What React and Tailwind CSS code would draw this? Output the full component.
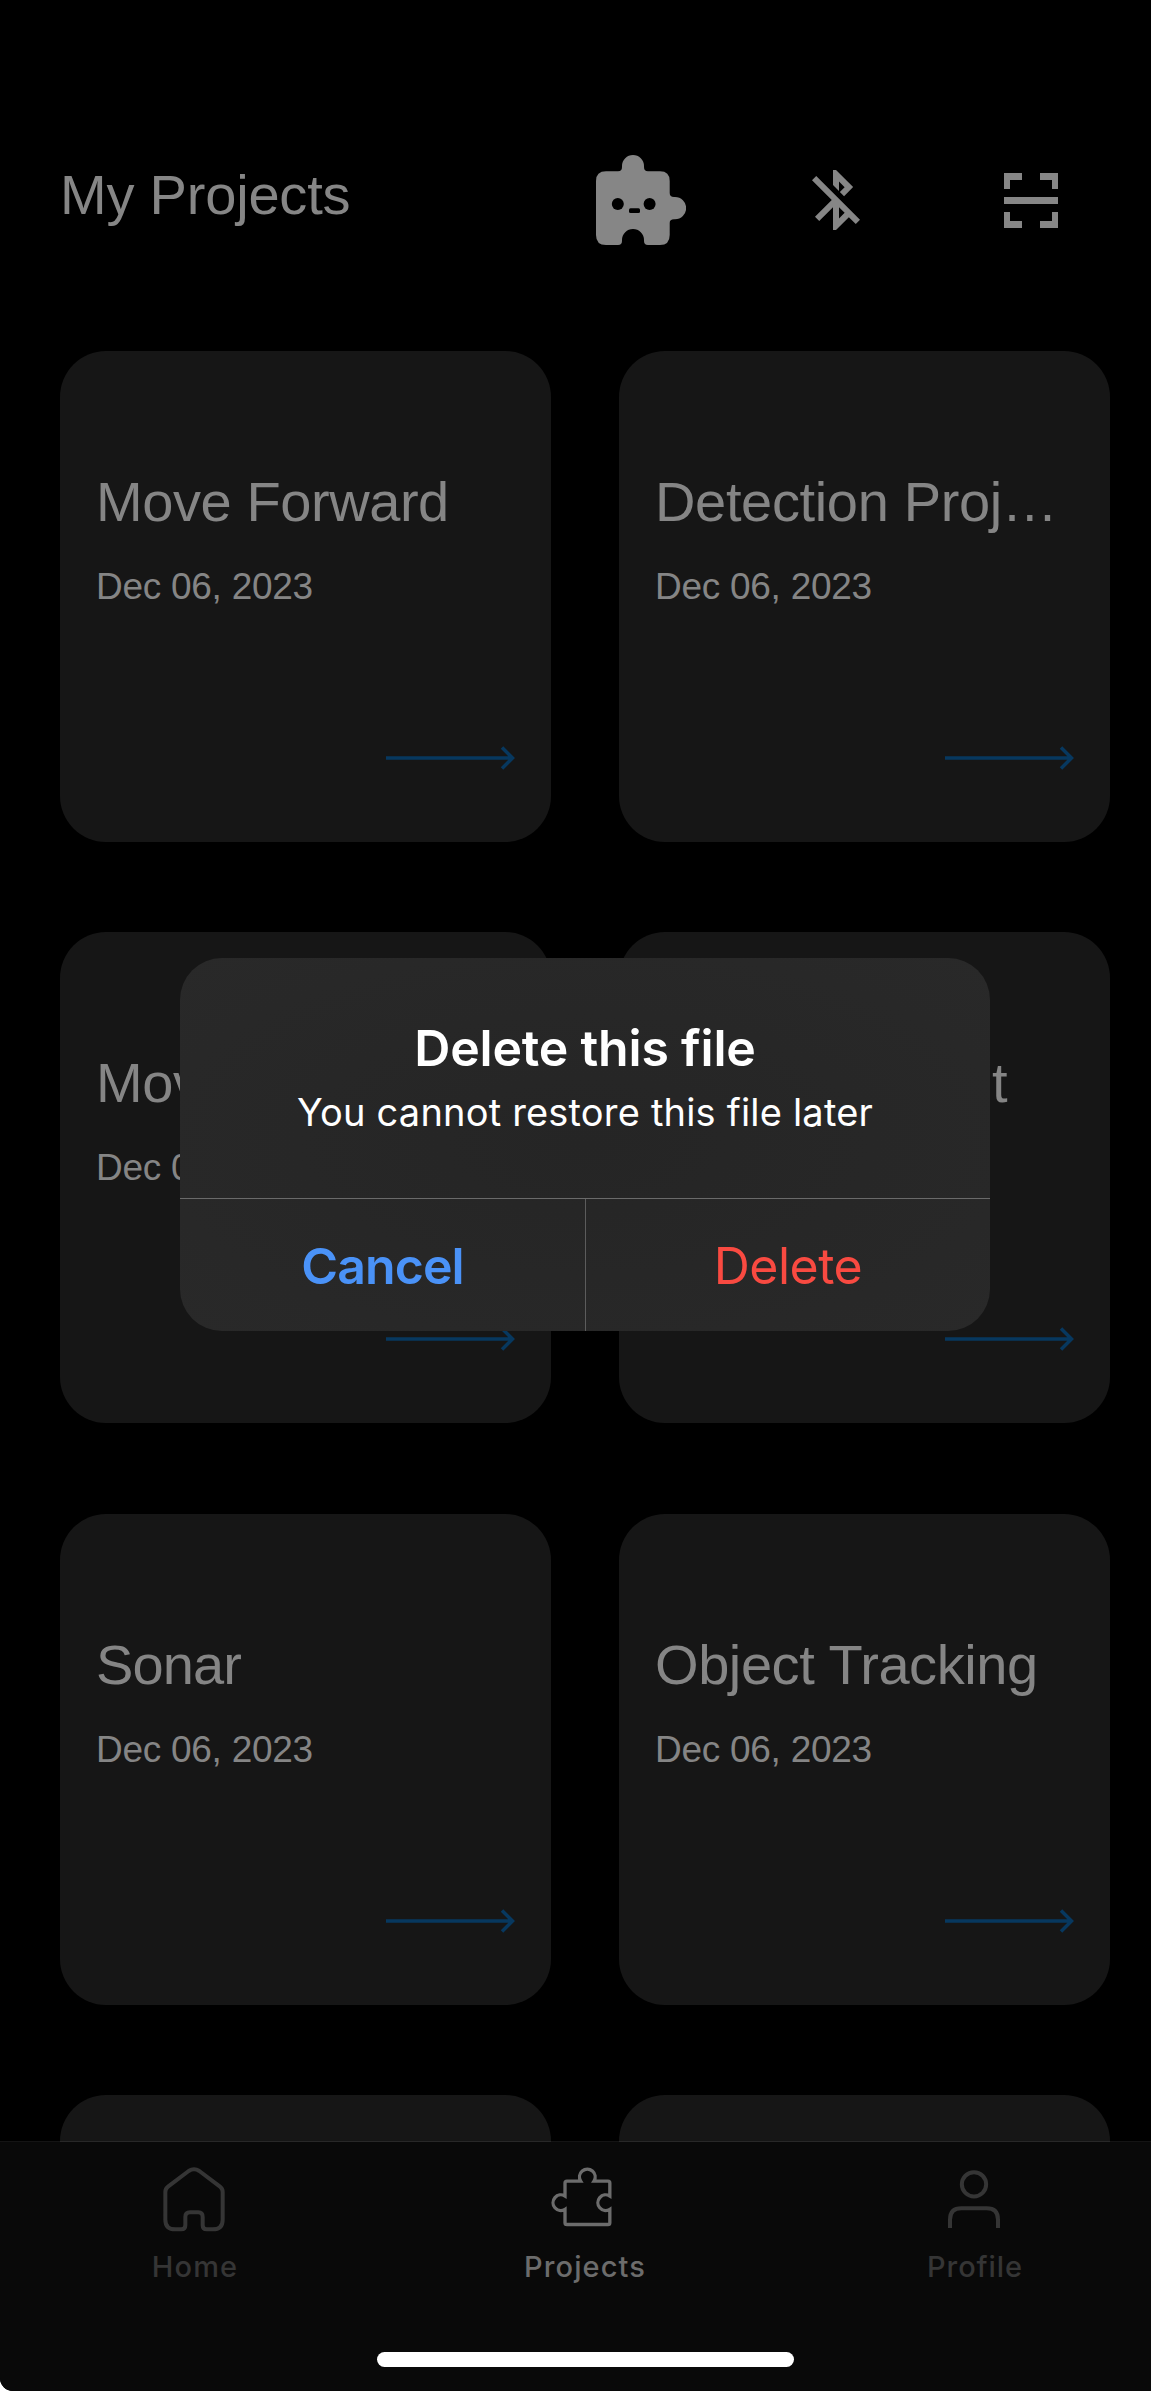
const projects = [
  { title: "Move Forward", tracking: "tracking-[-0.42px]" },
  { title: "Detection Proj…", tracking: "tracking-[-0.35px]" },
  { title: "Move Backward", tracking: "tracking-[-0.42px]" },
  { title: "Detect Object", tracking: "tracking-[1.1px]" },
  { title: "Sonar", tracking: "tracking-[-0.9px]" },
  { title: "Object Tracking", tracking: "tracking-[-0.42px]" },
  { title: "", tracking: "" },
  { title: "", tracking: "" },
];

function RobotPuzzleIcon() {
  return (
    <svg className="h-[90px] w-[90px]" viewBox="0 0 90 90">
      <path
        fill="#868686"
        d="M10 16.3H22Q26 16.3 26 12V11A11 11 0 0 1 48 11V12Q48 16.3 52 16.3H64Q73.7 16.3 73.7 26V38Q73.7 42 78 42H79A11 11 0 0 1 79 64.3H78Q73.7 64.3 73.7 68V80Q73.7 90 64 90H52Q48 90 48 86V85A11 11 0 0 0 26 85V86Q26 90 22 90H10Q0 90 0 80V26Q0 16.3 10 16.3Z"
      />
      <circle cx="21.8" cy="49" r="6" fill="#000" />
      <circle cx="53.6" cy="49" r="6" fill="#000" />
      <rect x="33" y="53.3" width="11" height="4.7" rx="1.5" fill="#000" />
    </svg>
  );
}

function BluetoothOffIcon() {
  return (
    <svg className="h-[72px] w-[72px]" viewBox="0 0 24 24" fill="#868686">
      <path d="M13 5.83l1.88 1.88-1.6 1.6 1.41 1.41 3.02-3.02L12 2h-1v5.03l2 2v-3.2zM5.41 4L4 5.41 10.59 12 5 17.59 6.41 19 11 14.41V22h1l4.29-4.29 2.3 2.29L20 18.59 5.41 4zM13 18.17v-3.76l1.88 1.88L13 18.17z" />
    </svg>
  );
}

function ScanIcon() {
  return (
    <svg className="h-[55px] w-[54px]" viewBox="0 0 54 55" fill="#868686">
      <path d="M0 0H18V7H6V16H0ZM36 0H54V16H48V7H36ZM0 24H54V31H0ZM0 39H6V48H18V55H0ZM48 39H54V55H36V48H48Z" />
    </svg>
  );
}

function HomeIcon() {
  return (
    <svg className="h-[72px] w-[72px]" viewBox="477 248 216 216" fill="none" stroke="#353535" strokeWidth="12">
      <path d="M496 335Q496 325 504 319L566 272Q582 261 598 272L660 319Q668 325 668 335V418Q668 447 638 447H620Q608 447 608 435V410Q608 396 595 396H570Q556 396 556 410V435Q556 447 544 447H526Q496 447 496 418Z" />
    </svg>
  );
}

function PuzzleIcon() {
  return (
    <svg className="h-[72px] w-[72px]" viewBox="447 248 216 216" fill="none" stroke="#6c6c6c" strokeWidth="10">
      <path d="M495 347V308Q495 302.500 501 302.500H542A23.500 23.500 0 1 1 582 302.500H624Q629.500 302.500 629.500 308V347A23.500 23.500 0 1 0 629.500 387V427Q629.500 432.500 624 432.500H501Q495 432.500 495 427V387A23.500 23.500 0 1 1 495 347Z" />
    </svg>
  );
}

function ProfileIcon() {
  return (
    <svg className="h-[72px] w-[72px]" viewBox="417 248 216 216" fill="none" stroke="#353535" strokeWidth="12">
      <circle cx="522" cy="312" r="36.5" />
      <path d="M450 443V418Q450 384 484 384H560Q594 384 594 418V443" />
    </svg>
  );
}

function ProjectCard({ title, tracking }) {
  return (
    <article className="flex h-[491px] flex-col rounded-[46px] bg-[#161616] px-[36px] pt-[119px] text-[#858585]">
      <h2 className={`h-16 text-[56px] leading-[64px] whitespace-nowrap ${tracking}`}>{title}</h2>
      {title && (
        <>
          <p className="mt-[31px] text-[37px] leading-[44px] tracking-[-0.27px]">Dec 06, 2023</p>
          <svg
            className="mt-[137px] h-6 w-[129px] self-end"
            viewBox="0 0 129 24"
            fill="none"
            stroke="#07385f"
            strokeWidth="3.5"
          >
            <path d="M0 12H126.500M116 1.500L126.500 12L116 22.500" />
          </svg>
        </>
      )}
    </article>
  );
}

const tabs = [
  { label: "Home", Icon: HomeIcon, color: "text-[#353535]", tracking: "tracking-[1.2px]" },
  { label: "Projects", Icon: PuzzleIcon, color: "text-[#6c6c6c]", tracking: "tracking-[1.1px]" },
  { label: "Profile", Icon: ProfileIcon, color: "text-[#353535]", tracking: "tracking-[0.9px]" },
];

export default function App() {
  return (
    <div className="h-[2391px] w-full overflow-hidden bg-white">
      <div className="relative h-[2391px] w-[1170px] overflow-hidden rounded-bl-[13px] bg-black font-['Liberation_Sans',sans-serif]">
        <header className="flex h-[351px] items-start pl-[60px] text-[#868686]">
          <h1 className="mt-[163px] w-[536px] text-[56px] leading-[64px] tracking-[-0.2px]">My Projects</h1>
          <div className="mt-[154.500px] flex h-[91px] items-center">
            <RobotPuzzleIcon />
            <div className="ml-[114px]">
              <BluetoothOffIcon />
            </div>
            <div className="ml-[132px]">
              <ScanIcon />
            </div>
          </div>
        </header>

        <main className="grid grid-cols-[491px_491px] gap-x-[68px] gap-y-[90.4px] pl-[60px]">
          {projects.map((p, i) => (
            <ProjectCard key={i} {...p} />
          ))}
        </main>

        <nav className="absolute inset-x-0 bottom-0 font-[Inter,sans-serif]">
          <div className="h-px bg-white/8" />
          <div className="grid h-[249px] grid-cols-3 bg-[#090909] pt-[20.700px]">
            {tabs.map(({ label, Icon, color, tracking }) => (
              <div key={label} className={`flex flex-col items-center ${color}`}>
                <Icon />
                <span className={`mt-[14px] text-[29px] leading-[36px] font-medium ${tracking}`}>{label}</span>
              </div>
            ))}
          </div>
          <div className="absolute bottom-[24px] left-[377px] h-[15px] w-[417px] rounded-full bg-white" />
        </nav>

        <div
          role="dialog"
          className="absolute top-[958px] left-[180px] flex h-[373px] w-[810px] flex-col overflow-hidden rounded-[42px] bg-[radial-gradient(ellipse_at_center,#252525,#292929)] text-center font-[Inter,sans-serif] text-white"
        >
          <div className="h-[240px] pt-[60px]">
            <h3 className="text-[50px] leading-[60px] font-semibold tracking-[-0.2px]">Delete this file</h3>
            <p className="mt-[11px] text-[38px] leading-[46px] tracking-[0.19px]">You cannot restore this file later</p>
          </div>
          <div className="grid flex-1 grid-cols-[406px_404px] border-t border-[#6a6a6a]">
            <button className="border-r border-[#5c5c5c] pt-[2px] text-[50px] leading-[60px] font-semibold tracking-[-0.9px] text-[#4a92f7]">
              Cancel
            </button>
            <button className="pt-[2px] text-[50px] leading-[60px] tracking-[-0.5px] text-[#f94a41]">Delete</button>
          </div>
        </div>
      </div>
    </div>
  );
}
